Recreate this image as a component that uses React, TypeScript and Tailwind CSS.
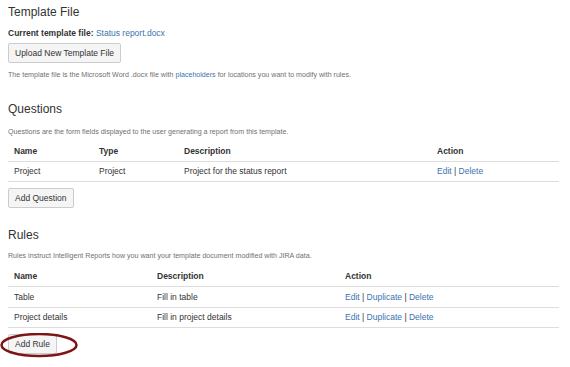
import React from 'react';

const font = { fontFamily: '"Liberation Sans", Arial, sans-serif' };

function Btn({ children, className = '' }: { children: React.ReactNode; className?: string }) {
  return (
    <button
      className={`flex items-center h-[20px] px-[6px] bg-[#f5f5f5] border border-[#cccccc] rounded-[2px] text-[8.5px] leading-none text-[#333] ${className}`}
    >
      {children}
    </button>
  );
}

function Link({ children }: { children: React.ReactNode }) {
  return <span className="text-[#3b73af]">{children}</span>;
}

function Actions({ items }: { items: string[] }) {
  return (
    <span>
      {items.map((it, i) => (
        <React.Fragment key={it}>
          {i > 0 && <span className="text-[#333]"> | </span>}
          <Link>{it}</Link>
        </React.Fragment>
      ))}
    </span>
  );
}

function Table({ cols, header, rows, rowH }: { cols: string; header: string[]; rows: React.ReactNode[][]; rowH: string[] }) {
  return (
    <div className="w-[551px] text-[8.5px] text-[#333]">
      <div className={`grid ${cols} h-[21px] items-center border-b border-[#dddddd] font-bold`}>
        {header.map((h) => (
          <div key={h} className="pl-[6px]">{h}</div>
        ))}
      </div>
      {rows.map((r, i) => (
        <div key={i} className={`grid ${cols} ${rowH[i]} items-center border-b border-[#dddddd]`}>
          {r.map((c, j) => (
            <div key={j} className="pl-[6px]">{c}</div>
          ))}
        </div>
      ))}
    </div>
  );
}

export default function App() {
  return (
    <div style={font} className="w-[570px] h-[367px] bg-white px-2 pt-[4px] overflow-hidden text-[#333]">
      <h3 className="text-[12px] leading-[16px] font-normal">Template File</h3>
      <p className="mt-[7px] text-[8.5px] leading-[12px]">
        <span className="font-bold">Current template file:</span> <Link>Status report.docx</Link>
      </p>
      <Btn className="mt-[4px]">Upload New Template File</Btn>
      <p className="mt-[7px] text-[7.1px] leading-[10px] text-[#707070]">
        The template file is the Microsoft Word .docx file with <Link>placeholders</Link> for locations you want to modify with rules.
      </p>

      <h3 className="mt-[21px] text-[12px] leading-[16px] font-normal">Questions</h3>
      <p className="mt-[10px] text-[7.1px] leading-[10px] text-[#707070]">
        Questions are the form fields displayed to the user generating a report from this template.
      </p>
      <div className="mt-[4px]">
        <Table
          cols="grid-cols-[85px_85px_253px_1fr]"
          header={['Name', 'Type', 'Description', 'Action']}
          rowH={['h-[20px]']}
          rows={[['Project', 'Project', 'Project for the status report', <Actions items={['Edit', 'Delete']} />]]}
        />
      </div>
      <Btn className="mt-[6px] h-[19px]">Add Question</Btn>

      <h3 className="mt-[19px] text-[12px] leading-[16px] font-normal">Rules</h3>
      <p className="mt-[8px] text-[7.1px] leading-[10px] text-[#707070]">
        Rules instruct Intelligent Reports how you want your template document modified with JIRA data.
      </p>
      <div className="mt-[5px]">
        <Table
          cols="grid-cols-[143px_188px_1fr]"
          header={['Name', 'Description', 'Action']}
          rowH={['h-[21px]', 'h-[20px]']}
          rows={[
            ['Table', 'Fill in table', <Actions items={['Edit', 'Duplicate', 'Delete']} />],
            ['Project details', 'Fill in project details', <Actions items={['Edit', 'Duplicate', 'Delete']} />],
          ]}
        />
      </div>
      <div className="relative mt-[6px] w-fit">
        <Btn className="h-[19px]">Add Rule</Btn>
        <svg className="absolute left-[-8px] top-[-1px]" width="80" height="25" viewBox="0 0 80 25">
          <ellipse cx="39" cy="12" rx="37.5" ry="11" fill="none" stroke="#7f1416" strokeWidth="2.5" />
        </svg>
      </div>
    </div>
  );
}
